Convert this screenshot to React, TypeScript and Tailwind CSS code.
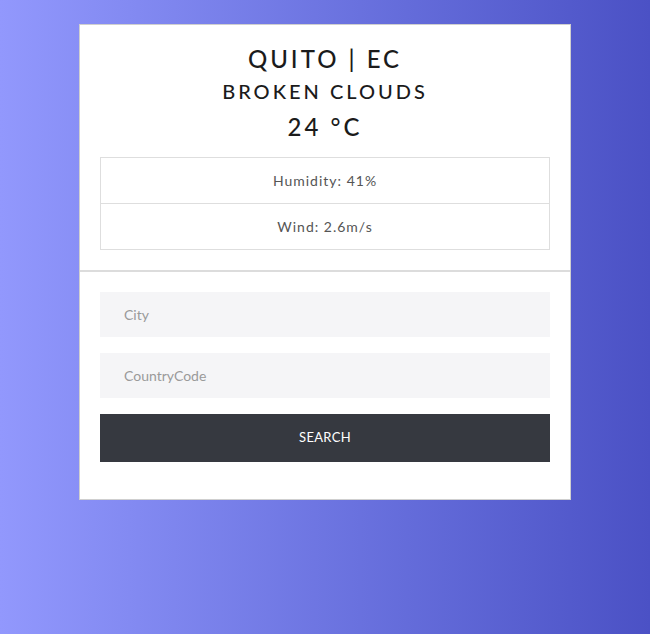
import React from "react";

export default function App() {
  return (
    <div
      className="min-h-[634px] w-full bg-gradient-to-r from-[#9298fd] to-[#4b51c5] pt-6"
      style={{ fontFamily: "Lato, 'Noto Sans', sans-serif" }}
    >
      <div className="mx-auto w-[492px] border border-[#cfcfcf] bg-white">
        {/* weather */}
        <div className="px-5 pt-[17px] pb-5 text-center text-[#1b1b1b]">
          <h1 className="text-[24px] leading-[34px] tracking-[3px] font-medium">QUITO | EC</h1>
          <h2 className="text-[20px] leading-[30px] tracking-[3px] font-medium">BROKEN CLOUDS</h2>
          <h3 className="mt-[6px] text-[24px] leading-[30px] tracking-[3px] font-medium">24 °C</h3>
          <div className="mt-[15px] border border-[#dedede] text-[14px] tracking-[1px] text-[#555]">
            <div className="h-[46px] flex items-center justify-center border-b border-[#dedede]">Humidity: 41%</div>
            <div className="h-[45px] flex items-center justify-center">Wind: 2.6m/s</div>
          </div>
        </div>
        <div className="h-[2px] bg-[#dcdcdc]" />
        {/* form */}
        <form className="px-5 pt-5 pb-[37px] flex flex-col gap-4">
          <input
            placeholder="City"
            className="h-[45px] bg-[#f5f5f7] px-6 text-[14px] text-[#333] placeholder:text-[#9a9a9a] outline-none"
          />
          <input
            placeholder="CountryCode"
            className="h-[45px] bg-[#f5f5f7] px-6 text-[14px] text-[#333] placeholder:text-[#9a9a9a] outline-none"
          />
          <button
            type="button"
            className="h-[48px] bg-[#363940] text-white text-[13px] tracking-[0.3px]"
          >
            SEARCH
          </button>
        </form>
      </div>
    </div>
  );
}
